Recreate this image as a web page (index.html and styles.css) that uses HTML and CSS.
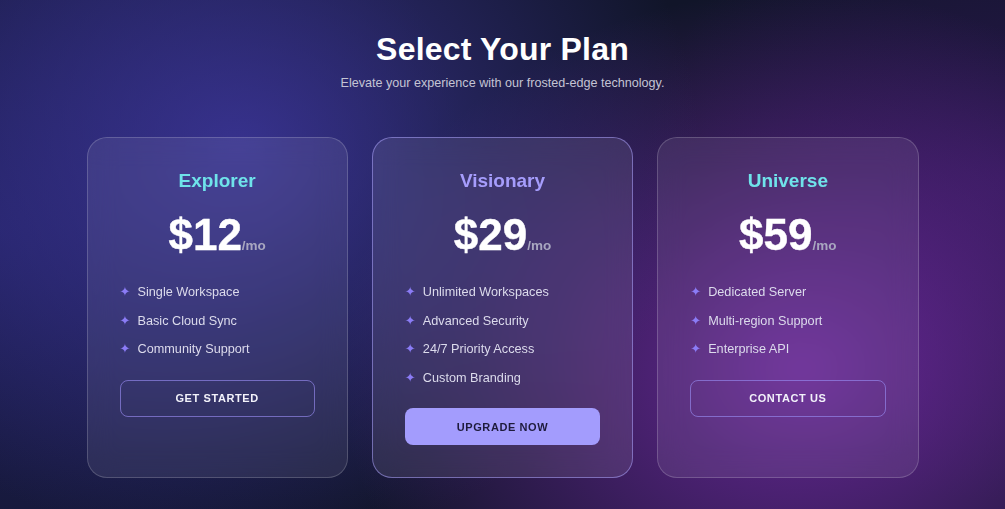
FILE: index.html
```html
<!DOCTYPE html>
<html lang="en">
<head>
<meta charset="utf-8">
<title>Select Your Plan</title>
<link rel="stylesheet" href="styles.css">
</head>
<body>
<main class="page">
  <header class="hero">
    <h1 class="title">Select Your Plan</h1>
    <p class="subtitle">Elevate your experience with our frosted-edge technology.</p>
  </header>
  <section class="plans">
    <article class="card">
      <h2 class="plan-name cyan">Explorer</h2>
      <div class="price"><span class="amount">$12</span><span class="per">/mo</span></div>
      <ul class="features">
        <li><span class="star">✦</span>Single Workspace</li>
        <li><span class="star">✦</span>Basic Cloud Sync</li>
        <li><span class="star">✦</span>Community Support</li>
      </ul>
      <button class="btn btn-outline">GET STARTED</button>
    </article>
    <article class="card card-featured">
      <h2 class="plan-name violet">Visionary</h2>
      <div class="price"><span class="amount">$29</span><span class="per">/mo</span></div>
      <ul class="features">
        <li><span class="star">✦</span>Unlimited Workspaces</li>
        <li><span class="star">✦</span>Advanced Security</li>
        <li><span class="star">✦</span>24/7 Priority Access</li>
        <li><span class="star">✦</span>Custom Branding</li>
      </ul>
      <button class="btn btn-solid">UPGRADE NOW</button>
    </article>
    <article class="card">
      <h2 class="plan-name cyan">Universe</h2>
      <div class="price"><span class="amount">$59</span><span class="per">/mo</span></div>
      <ul class="features">
        <li><span class="star">✦</span>Dedicated Server</li>
        <li><span class="star">✦</span>Multi-region Support</li>
        <li><span class="star">✦</span>Enterprise API</li>
      </ul>
      <button class="btn btn-outline">CONTACT US</button>
    </article>
  </section>
</main>
</body>
</html>
```
FILE: styles.css
```css
* { box-sizing: border-box; }
html, body {
  margin: 0;
  height: 100%;
}
body {
  font-family: "Liberation Sans", Arial, sans-serif;
  color: #fff;
  background:
    radial-gradient(ellipse 460px 400px at 240px 150px, rgba(66, 58, 168, 0.75), rgba(66, 58, 168, 0) 100%),
    radial-gradient(ellipse 460px 380px at 800px 370px, rgba(118, 42, 168, 0.85), rgba(118, 42, 168, 0) 100%),
    radial-gradient(ellipse 480px 460px at 0px 230px, rgba(38, 36, 112, 0.7), rgba(38, 36, 112, 0) 100%),
    radial-gradient(ellipse 360px 320px at 1005px 180px, rgba(60, 26, 108, 0.55), rgba(60, 26, 108, 0) 100%),
    #111529;
  overflow: hidden;
}
.page {
  padding-top: 30px;
}
.hero {
  text-align: center;
}
.title {
  margin: 0;
  font-size: 32px;
  line-height: 38px;
  font-weight: 700;
  letter-spacing: 0.2px;
}
.subtitle {
  margin: 6px 0 0;
  font-size: 12.6px;
  line-height: 18px;
  color: #c4c4d4;
}
.plans {
  width: 832px;
  margin: 45px auto 0;
  display: grid;
  grid-template-columns: repeat(3, 1fr);
  gap: 24px;
}
.card {
  display: flex;
  flex-direction: column;
  padding: 32px;
  border-radius: 20px;
  border: 1px solid rgba(255, 255, 255, 0.18);
  background: rgba(255, 255, 255, 0.08);
  backdrop-filter: blur(14px);
  text-align: center;
}
.card-featured {
  border-color: rgba(170, 160, 250, 0.55);
  background: rgba(255, 255, 255, 0.09);
}
.plan-name {
  margin: 0;
  font-size: 19px;
  line-height: 22px;
  font-weight: 700;
}
.cyan { color: #6fe3ea; }
.violet { color: #a69dfc; }
.price {
  margin-top: 23px;
  line-height: 40px;
  height: 40px;
}
.amount {
  font-size: 44px;
  font-weight: 700;
  -webkit-text-stroke: 0.4px #fff;
}
.per {
  font-size: 13.5px;
  font-weight: 700;
  color: #a9a7c0;
}
.features {
  list-style: none;
  margin: 23px 0 0;
  padding: 0;
  text-align: left;
}
.features li {
  font-size: 12.7px;
  line-height: 28.5px;
  color: #dcdbec;
  display: flex;
  align-items: center;
}
.star {
  font-family: "DejaVu Sans", sans-serif;
  color: #8b7cf6;
  font-size: 13px;
  width: 18px;
}
.btn {
  margin-top: 16px;
  height: 37px;
  flex: 0 0 37px;
  width: 100%;
  border-radius: 8px;
  font-family: "Liberation Sans", Arial, sans-serif;
  font-size: 11px;
  font-weight: 700;
  letter-spacing: 0.6px;
  cursor: pointer;
}
.btn-outline {
  background: transparent;
  border: 1px solid rgba(150, 138, 240, 0.65);
  color: #f2f2fa;
}
.btn-solid {
  background: #a39cfd;
  border: none;
  color: #1e1b3c;
}
```
